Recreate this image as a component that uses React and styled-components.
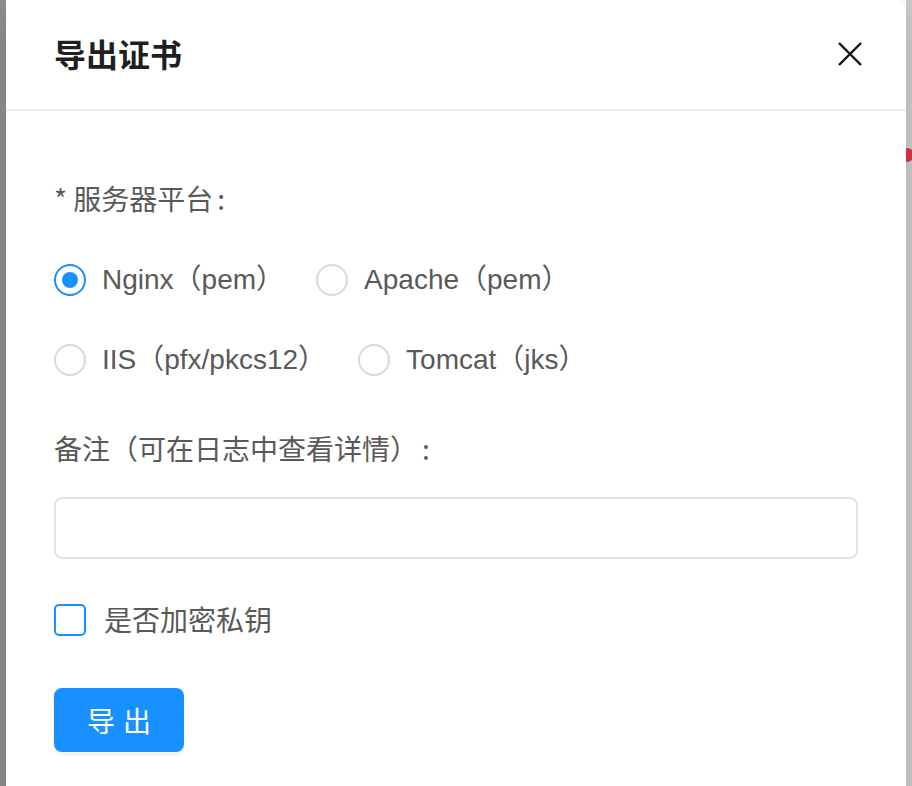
import React, { useState } from "react";
import styled, { createGlobalStyle } from "styled-components";

const Global = createGlobalStyle`
  html, body { margin: 0; padding: 0; }
  body {
    width: 912px;
    height: 786px;
    overflow: hidden;
    font-family: "Liberation Sans", "Noto Sans CJK SC", sans-serif;
  }
  * { box-sizing: border-box; }
`;

const Page = styled.div`
  display: flex;
  width: 912px;
  height: 786px;
  overflow: hidden;
`;

const Backdrop = styled.div`
  position: relative;
  width: 6px;
  flex: none;
  background: ${(p) => p.$color};
`;

const Dot = styled.span`
  position: absolute;
  left: -6px;
  top: 148px;
  width: 14px;
  height: 14px;
  border-radius: 50%;
  background: #d9363e;
`;

const Modal = styled.div`
  position: relative;
  z-index: 1;
  width: 900px;
  flex: none;
  height: 820px;
  background: #fff;
  border-radius: 0 14px 0 0;
  display: flex;
  flex-direction: column;
  box-shadow: 0 6px 32px rgba(0, 0, 0, 0.12);
`;

const Header = styled.div`
  height: 111px;
  flex: none;
  display: flex;
  align-items: center;
  justify-content: space-between;
  padding: 0 0 0 48px;
  border-bottom: 2px solid #ececec;
`;

const Title = styled.div`
  font-family: "Noto Sans CJK SC", sans-serif;
  font-size: 32px;
  font-weight: 700;
  color: #1f1f1f;
  line-height: 44px;
  margin-top: -3px;
`;

const Close = styled.button`
  width: 112px;
  height: 112px;
  border: 0;
  background: transparent;
  display: flex;
  align-items: center;
  justify-content: center;
  padding: 0;
  margin-top: -2px;
  cursor: pointer;
`;

const Body = styled.div`
  padding: 65px 48px 0 48px;
  display: flex;
  flex-direction: column;
`;

const Label = styled.div`
  font-family: "Noto Sans CJK SC", sans-serif;
  font-size: 28px;
  line-height: 44px;
  color: #595959;
  margin-top: ${(p) => p.$mt || 0}px;
  &::after {
    content: ":";
    margin-left: 4px;
  }
`;

const RadioRow = styled.div`
  display: flex;
  align-items: center;
  height: 44px;
  margin-top: ${(p) => p.$mt}px;
`;

const RadioItem = styled.label`
  display: inline-flex;
  align-items: center;
  margin-right: 16px;
  cursor: pointer;
`;

const RadioCircle = styled.span`
  width: 32px;
  height: 32px;
  border-radius: 50%;
  border: 2px solid ${(p) => (p.$checked ? "#1890ff" : "#d9d9d9")};
  display: flex;
  align-items: center;
  justify-content: center;
  flex: none;
  &::after {
    content: "";
    width: 16px;
    height: 16px;
    border-radius: 50%;
    background: #1890ff;
    display: ${(p) => (p.$checked ? "block" : "none")};
  }
`;

const ItemText = styled.span`
  padding: 0 16px;
  font-size: 28px;
  line-height: 44px;
  color: #595959;
  font-family: "Liberation Sans", "Noto Sans CJK SC", sans-serif;
`;

const Input = styled.input`
  margin-top: 27px;
  width: 804px;
  height: 62px;
  border: 2px solid #e3e3e3;
  border-radius: 8px;
  padding: 0 22px;
  font-size: 28px;
  color: #595959;
  outline: none;
  font-family: "Liberation Sans", "Noto Sans CJK SC", sans-serif;
`;

const CheckRow = styled.label`
  display: flex;
  align-items: center;
  height: 44px;
  margin-top: 39px;
  cursor: pointer;
`;

const CheckBox = styled.span`
  width: 32px;
  height: 32px;
  border: 2px solid #1890ff;
  border-radius: 5px;
  flex: none;
  background: #fff;
`;

const CheckText = styled(ItemText)`
  font-family: "Noto Sans CJK SC", sans-serif;
  padding-left: 18px;
  margin-top: -2px;
`;

const Button = styled.button`
  margin-top: 46px;
  width: 130px;
  height: 64px;
  border: 0;
  border-radius: 8px;
  background: #1890ff;
  color: #fff;
  font-size: 28px;
  font-family: "Liberation Sans", "Noto Sans CJK SC", sans-serif;
  box-shadow: 0 4px 0 rgba(0, 0, 0, 0.045);
  cursor: pointer;
  padding: 0;
`;

const options = [
  [
    { key: "nginx", label: "Nginx（pem）" },
    { key: "apache", label: "Apache（pem）" },
  ],
  [
    { key: "iis", label: "IIS（pfx/pkcs12）" },
    { key: "tomcat", label: "Tomcat（jks）" },
  ],
];

export default function App() {
  const [value, setValue] = useState("nginx");
  return (
    <Page>
      <Global />
      <Backdrop $color="#8e8e8e" />
      <Modal>
        <Header>
          <Title>导出证书</Title>
          <Close aria-label="close">
            <svg width="24" height="24" viewBox="0 0 24 24">
              <path d="M1 1 L23 23 M23 1 L1 23" stroke="#111" strokeWidth="2.4" fill="none" />
            </svg>
          </Close>
        </Header>
        <Body>
          <Label>* 服务器平台</Label>
          {options.map((row, i) => (
            <RadioRow key={i} $mt={i === 0 ? 38 : 36}>
              {row.map((o) => (
                <RadioItem key={o.key} onClick={() => setValue(o.key)}>
                  <RadioCircle $checked={value === o.key} />
                  <ItemText>{o.label}</ItemText>
                </RadioItem>
              ))}
            </RadioRow>
          ))}
          <Label $mt={44}>备注（可在日志中查看详情）</Label>
          <Input />
          <CheckRow>
            <CheckBox />
            <CheckText>是否加密私钥</CheckText>
          </CheckRow>
          <Button>导 出</Button>
        </Body>
      </Modal>
      <Backdrop $color="#cacaca">
        <Dot />
      </Backdrop>
    </Page>
  );
}
